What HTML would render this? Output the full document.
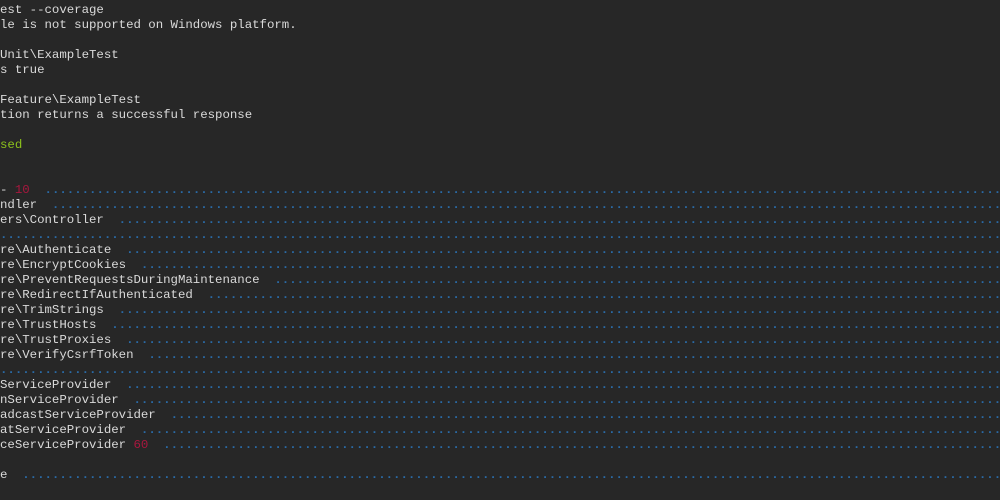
<!DOCTYPE html>
<html><head><meta charset="utf-8"><style>
html,body{margin:0;padding:0;background:#272727;width:1000px;height:500px;overflow:hidden}
#t{position:absolute;left:0;top:3px;width:1000px;overflow:hidden;font-family:"Liberation Mono",monospace;font-size:12.4px;line-height:15px;color:#dadada;white-space:pre;letter-spacing:-0.02px}
.d{color:#2a6aa6;font-weight:bold}
.r{color:#a8173e}
.g{color:#8cc21c}
</style></head><body><div id="t">est --coverage
le is not supported on Windows platform.

Unit\ExampleTest
s true

Feature\ExampleTest
tion returns a successful response

<span class="g">sed</span>


- <span class="r">10</span>  <span class="d">.......................................................................................................................................................</span>
ndler  <span class="d">...................................................................................................................................................</span>
ers\Controller  <span class="d">..........................................................................................................................................</span>
<span class="d">.........................................................................................................................................................</span>
re\Authenticate  <span class="d">.........................................................................................................................................</span>
re\EncryptCookies  <span class="d">.......................................................................................................................................</span>
re\PreventRequestsDuringMaintenance  <span class="d">.....................................................................................................................</span>
re\RedirectIfAuthenticated  <span class="d">..............................................................................................................................</span>
re\TrimStrings  <span class="d">..........................................................................................................................................</span>
re\TrustHosts  <span class="d">...........................................................................................................................................</span>
re\TrustProxies  <span class="d">.........................................................................................................................................</span>
re\VerifyCsrfToken  <span class="d">......................................................................................................................................</span>
<span class="d">.........................................................................................................................................................</span>
ServiceProvider  <span class="d">.........................................................................................................................................</span>
nServiceProvider  <span class="d">........................................................................................................................................</span>
adcastServiceProvider  <span class="d">...................................................................................................................................</span>
atServiceProvider  <span class="d">.......................................................................................................................................</span>
ceServiceProvider <span class="r">60</span>  <span class="d">....................................................................................................................................</span>

e  <span class="d">.......................................................................................................................................................</span>
</div></body></html>
